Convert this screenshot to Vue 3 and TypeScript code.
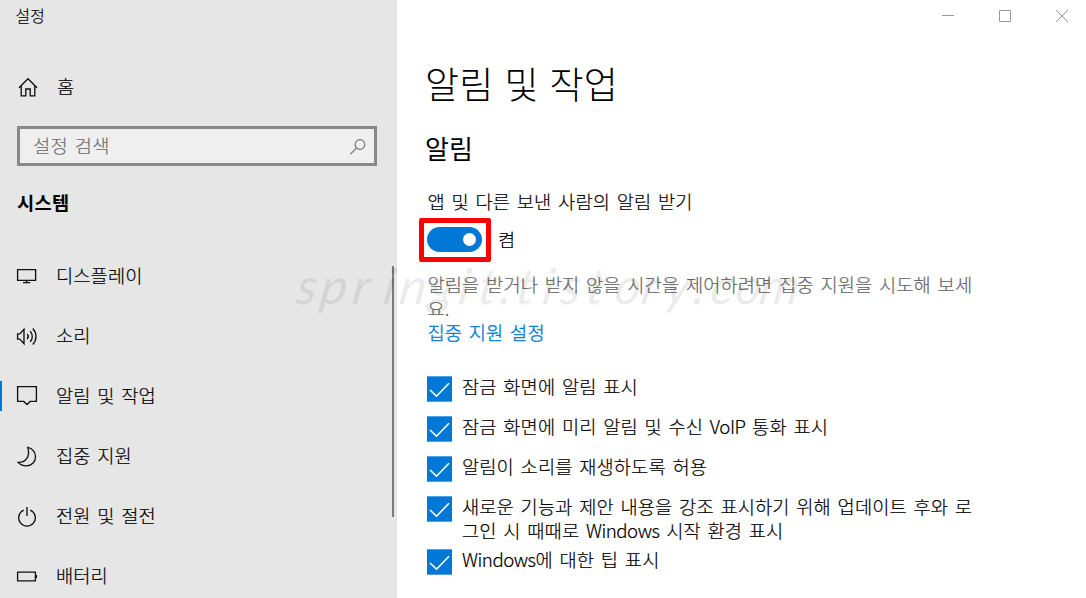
<script setup lang="ts">
interface NavItem {
  icon: string
  label: string
  active?: boolean
}

const navItems: NavItem[] = [
  { icon: 'display', label: '디스플레이' },
  { icon: 'sound', label: '소리' },
  { icon: 'notify', label: '알림 및 작업', active: true },
  { icon: 'moon', label: '집중 지원' },
  { icon: 'power', label: '전원 및 절전' },
  { icon: 'battery', label: '배터리' },
]

const options: string[][] = [
  ['잠금 화면에 알림 표시'],
  ['잠금 화면에 미리 알림 및 수신 VoIP 통화 표시'],
  ['알림이 소리를 재생하도록 허용'],
  ['새로운 기능과 제안 내용을 강조 표시하기 위해 업데이트 후와 로', '그인 시 때때로 Windows 시작 환경 표시'],
  ['Windows에 대한 팁 표시'],
]

// Splits a line into Latin and Hangul runs so each can be spaced separately.
const runs = (line: string): string[] => line.split(/([A-Za-z]+)/).filter((part) => part !== '')
const isLatin = (part: string): boolean => /^[A-Za-z]/.test(part)
</script>

<template>
  <div class="window">
    <aside class="sidebar">
      <div class="app-title">설정</div>
      <div class="home">
        <svg class="icon" width="22" height="22" viewBox="0 0 22 22">
          <path d="M2 11.7 11 2.8l9 8.9M4.2 10v9.8h4.6V13h4.4v6.8h4.6V10" />
        </svg>
        <span class="home-label">홈</span>
      </div>
      <div class="search">
        <span class="placeholder">설정 검색</span>
        <svg class="search-icon" width="18" height="18" viewBox="0 0 18 18">
          <circle cx="11" cy="6.5" r="4.8" />
          <path d="M7.4 10.1 1.5 16" />
        </svg>
      </div>
      <div class="group">시스템</div>
      <nav>
        <div v-for="item in navItems" :key="item.icon" class="nav-item" :class="{ active: item.active }">
          <svg class="icon" width="22" height="22" viewBox="0 0 22 22">
            <template v-if="item.icon === 'display'">
              <path d="M1.6 4.6h18v10.8h-18zM10.6 15.4v2.2M7 17.6h7.2" />
            </template>
            <template v-else-if="item.icon === 'sound'">
              <path d="M1.6 8.9h2.2l4.2-4.6v14.4l-4.2-4.6H1.6zM11.2 8.9c1.3 1.5 1.3 3.7 0 5.2M14.2 6.3c2.8 3 2.8 7.4 0 10.4M16.8 3.5c4.2 4.6 4.2 11.4 0 16" />
            </template>
            <template v-else-if="item.icon === 'notify'">
              <path d="M1.6 1.6h18.8v14.8h-6.2L11 19.6l-3.2-3.2H1.6z" />
            </template>
            <template v-else-if="item.icon === 'moon'">
              <path d="M11.7 2.4C16.4 3.2 19.5 7.2 19.5 11.8c0 5.2-4 9-9 9-3.6 0-6.6-1.2-8.4-3.4 8 .3 12.5-6.5 9.6-15z" />
            </template>
            <template v-else-if="item.icon === 'power'">
              <path d="M7.7 5.2a8.3 8.3 0 1 0 6.6 0M11 1.9v9" />
            </template>
            <template v-else>
              <path d="M1.6 7.1h17.8v8.8H1.6zM20.4 10v3" />
            </template>
          </svg>
          <span>{{ item.label }}</span>
        </div>
      </nav>
      <div class="scrollbar"></div>
    </aside>

    <main class="content">
      <div class="controls">
        <svg width="14" height="14" viewBox="0 0 14 14"><path d="M1 6.5h12" /></svg>
        <svg width="14" height="14" viewBox="0 0 14 14"><path d="M1.5 1.5h11v11h-11z" /></svg>
        <svg width="14" height="14" viewBox="0 0 14 14"><path d="m1 1 12 12M13 1 1 13" /></svg>
      </div>
      <h1>알림 및 작업</h1>
      <h2>알림</h2>
      <div class="setting-label">앱 및 다른 보낸 사람의 알림 받기</div>
      <div class="toggle-row">
        <div class="highlight">
          <div class="toggle"><div class="knob"></div></div>
        </div>
        <span class="toggle-label">켬</span>
      </div>
      <p class="description">알림을 받거나 받지 않을 시간을 제어하려면 집중 지원을 시도해 보세<br />요.</p>
      <a class="link">집중 지원 설정</a>
      <div class="options">
        <div v-for="(lines, i) in options" :key="i" class="option">
          <svg class="check" width="25" height="26" viewBox="0 0 25 26">
            <rect width="25" height="26" class="check-edge" />
            <rect y="0.7" width="25" height="24.6" class="check-fill" />
            <path d="m3 14 6.5 6.2L22 7.3" />
          </svg>
          <div class="option-text">
            <div v-for="line in lines" :key="line">
              <span v-for="(part, p) in runs(line)" :key="p" :class="{ latin: isLatin(part) }">{{ part }}</span>
            </div>
          </div>
        </div>
      </div>
    </main>

    <svg class="watermark" width="530" height="80" viewBox="0 0 530 80">
      <text
        transform="translate(0 48) skewX(-8)"
        x="5 29 61 92 108 138 167 187 209 225 251 269 295 323 350 374 402 419 444 468"
        y="0"
      >springit.tistory.com</text>
    </svg>
  </div>
</template>

<style>
body {
  overflow: hidden;
}
</style>

<style scoped>
.window {
  position: relative;
  display: flex;
  width: 1086px;
  height: 598px;
  overflow: hidden;
  background: #fff;
  color: #000;
  font-family: "Noto Sans CJK KR", sans-serif;
  font-size: 18.7px;
  font-weight: 300;
  line-height: 24px;
  letter-spacing: 0.11px;
  word-spacing: 2.45px;
  white-space: nowrap;
  -webkit-text-stroke-width: 0.2px;
}
.sidebar {
  position: relative;
  box-sizing: border-box;
  width: 397px;
  flex: none;
  background: #e6e6e6;
}
.app-title {
  height: 32px;
  padding-left: 15.5px;
  font-size: 15.8px;
  line-height: 32px;
}
.home {
  display: flex;
  align-items: center;
  gap: 18px;
  box-sizing: border-box;
  height: 90px;
  margin: -5px 0 9px;
  padding: 30px 0 0 17px;
}
.home-label {
  margin-top: -2px;
}
.icon {
  flex: none;
  fill: none;
  stroke: #111;
  stroke-width: 1.35;
}
.search {
  display: flex;
  align-items: center;
  justify-content: space-between;
  box-sizing: border-box;
  width: 360px;
  height: 40px;
  margin-left: 17px;
  padding: 0 7px 2px 13px;
  border: 3px solid #888;
  background: #efefef;
  color: #707070;
}
.placeholder {
  margin-top: -1px;
  letter-spacing: 0.3px;
}
.search-icon {
  margin-top: 3px;
  fill: none;
  stroke: #777;
  stroke-width: 1.2;
}
.group {
  box-sizing: border-box;
  height: 80px;
  padding: 24px 0 0 17px;
  font-weight: 700;
  letter-spacing: 0.3px;
  -webkit-text-stroke-width: 0;
}
.nav-item {
  display: flex;
  align-items: center;
  gap: 18px;
  height: 60px;
  padding-left: 16px;
}
.nav-item span {
  margin-top: -2px;
}
.active {
  background: linear-gradient(#0078d7, #0078d7) left center / 2px 30px no-repeat;
}
.scrollbar {
  position: absolute;
  top: 266px;
  left: 392px;
  width: 2px;
  height: 251px;
  background: #7a7a7a;
}
.content {
  flex: 1;
  box-sizing: border-box;
  padding-left: 31px;
}
.controls {
  display: flex;
  justify-content: flex-end;
  gap: 43px;
  box-sizing: border-box;
  height: 32px;
  padding: 9px 17px 0 0;
}
.controls svg {
  fill: none;
  stroke: #999;
  stroke-width: 1;
}
h1,
h2 {
  margin: 0 0 0 -3px;
  font-weight: 300;
}
h1 {
  padding-top: 23px;
  font-size: 37px;
  line-height: 56px;
  word-spacing: 2.8px;
  -webkit-text-stroke-width: 0;
}
h2 {
  padding-top: 19px;
  font-size: 26px;
  font-weight: 400;
  line-height: 36px;
  -webkit-text-stroke-width: 0;
}
.setting-label {
  margin-left: -0.5px;
  padding-top: 23px;
}
.toggle-row {
  display: flex;
  align-items: center;
  gap: 7px;
  height: 44px;
  margin: 5px 0 0 -9px;
}
.toggle-label {
  margin-top: -2px;
}
.highlight {
  display: flex;
  box-sizing: border-box;
  width: 72px;
  height: 44px;
  padding: 4px 0 0 3px;
  border: 5px solid #f00;
  border-radius: 2px;
}
.toggle {
  display: flex;
  align-items: center;
  justify-content: flex-end;
  box-sizing: border-box;
  width: 55px;
  height: 25px;
  padding-right: 6px;
  border-radius: 13px;
  background: #0078d7;
}
.knob {
  width: 13px;
  height: 13px;
  border-radius: 50%;
  background: #fff;
}
.description {
  margin: 10px 0 0 -0.5px;
  color: #666;
}
.link {
  display: block;
  margin-left: -0.5px;
  color: #0078d7;
  -webkit-text-stroke-width: 0.35px;
}
.options {
  display: flex;
  flex-direction: column;
  gap: 14px;
  margin: 32px 0 0 -1px;
}
.option {
  display: flex;
  gap: 10px;
  min-height: 26px;
}
.option:last-child {
  margin-top: -7px;
}
.option-text {
  margin-top: -2px;
}
.latin {
  letter-spacing: -0.5px;
}
.check {
  flex: none;
}
.check-edge {
  fill: #75b5e8;
}
.check-fill {
  fill: #0078d7;
}
.check path {
  fill: none;
  stroke: #fff;
  stroke-width: 1.6;
}
.watermark {
  position: absolute;
  left: 290px;
  top: 256px;
  pointer-events: none;
}
.watermark text {
  fill: #000;
  fill-opacity: 0.08;
  font-family: Lato, sans-serif;
  font-size: 50px;
  font-style: italic;
  font-weight: 400;
  -webkit-text-stroke-width: 0;
}
</style>
